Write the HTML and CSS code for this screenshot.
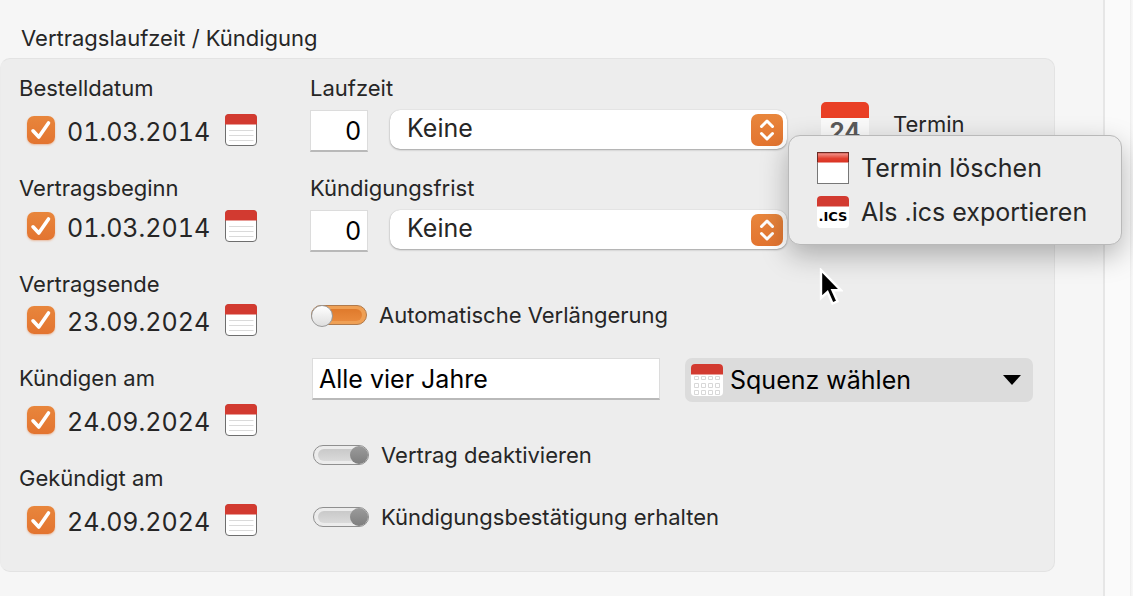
FILE: index.html
```html
<!DOCTYPE html>
<html lang="de">
<head>
<meta charset="utf-8">
<meta name="viewport" content="width=device-width, initial-scale=1">
<title>Vertragslaufzeit / Kündigung</title>
<link rel="stylesheet" href="styles.css">
</head>
<body>
<svg class="defs" aria-hidden="true">
  <symbol id="check" viewBox="0 0 28 28"><path d="M6 14.8 L11.8 21 L21.5 7" fill="none" stroke="#fff" stroke-width="3.6" stroke-linecap="round" stroke-linejoin="round"/></symbol>
  <symbol id="calendar" viewBox="0 0 32 32">
    <rect x=".5" y=".5" width="31" height="31" rx="3.5" fill="#fff" stroke="#6e6e6e"/>
    <path d="M0 10.5V4a4 4 0 0 1 4-4h24a4 4 0 0 1 4 4v6.500z" fill="#d23a30"/>
    <path d="M4 16.500h24.500M4 21.500h24.500M4 26.500h24.500" stroke="#dadada"/>
  </symbol>
  <symbol id="updown" viewBox="0 0 32 32"><path d="M10.500 12.500 L16 7 L21.500 12.500 M10.500 19.500 L16 25 L21.500 19.500" fill="none" stroke="#fff" stroke-width="3" stroke-linecap="round" stroke-linejoin="round"/></symbol>
</svg>
<main class="page">
  <h1 class="title">Vertragslaufzeit / Kündigung</h1>
  <form class="panel">
    <div class="dates">
      <div class="date-group">
        <label class="label" for="d1">Bestelldatum</label>
        <div class="date-row">
          <span class="check"><input type="checkbox" checked aria-label="Bestelldatum aktiv"><svg><use href="#check"/></svg></span>
          <input class="date" id="d1" type="text" value="01.03.2014">
          <button class="icon-button" type="button" aria-label="Bestelldatum wählen"><svg><use href="#calendar"/></svg></button>
        </div>
      </div>
      <div class="date-group compact">
        <label class="label" for="d2">Vertragsbeginn</label>
        <div class="date-row">
          <span class="check"><input type="checkbox" checked aria-label="Vertragsbeginn aktiv"><svg><use href="#check"/></svg></span>
          <input class="date" id="d2" type="text" value="01.03.2014">
          <button class="icon-button" type="button" aria-label="Vertragsbeginn wählen"><svg><use href="#calendar"/></svg></button>
        </div>
      </div>
      <div class="date-group tight">
        <label class="label" for="d3">Vertragsende</label>
        <div class="date-row">
          <span class="check"><input type="checkbox" checked aria-label="Vertragsende aktiv"><svg><use href="#check"/></svg></span>
          <input class="date" id="d3" type="text" value="23.09.2024">
          <button class="icon-button" type="button" aria-label="Vertragsende wählen"><svg><use href="#calendar"/></svg></button>
        </div>
      </div>
      <div class="date-group">
        <label class="label" for="d4">Kündigen am</label>
        <div class="date-row">
          <span class="check"><input type="checkbox" checked aria-label="Kündigen am aktiv"><svg><use href="#check"/></svg></span>
          <input class="date" id="d4" type="text" value="24.09.2024">
          <button class="icon-button" type="button" aria-label="Kündigen am wählen"><svg><use href="#calendar"/></svg></button>
        </div>
      </div>
      <div class="date-group">
        <label class="label" for="d5">Gekündigt am</label>
        <div class="date-row">
          <span class="check"><input type="checkbox" checked aria-label="Gekündigt am aktiv"><svg><use href="#check"/></svg></span>
          <input class="date" id="d5" type="text" value="24.09.2024">
          <button class="icon-button" type="button" aria-label="Gekündigt am wählen"><svg><use href="#calendar"/></svg></button>
        </div>
      </div>
    </div>

    <div class="terms">
      <div class="terms-top">
        <div class="periods">
          <div class="period">
            <label class="label" for="p1">Laufzeit</label>
            <div class="period-row">
              <input class="field number" id="p1" type="text" value="0">
              <span class="popup"><select aria-label="Einheit der Laufzeit"><option>Keine</option></select><svg><use href="#updown"/></svg></span>
            </div>
          </div>
          <div class="period">
            <label class="label" for="p2">Kündigungsfrist</label>
            <div class="period-row">
              <input class="field number" id="p2" type="text" value="0">
              <span class="popup"><select aria-label="Einheit der Kündigungsfrist"><option>Keine</option></select><svg><use href="#updown"/></svg></span>
            </div>
          </div>
        </div>
        <div class="event">
          <button class="event-button" type="button" aria-haspopup="menu" aria-expanded="true">
            <span class="day"><span class="day-number">24</span></span>
            <span class="event-label">Termin</span>
          </button>
          <div class="menu" role="menu">
            <button class="menu-item" type="button" role="menuitem">
              <svg viewBox="0 0 32 32">
                <defs><linearGradient id="gloss" x2="0" y2="1"><stop stop-color="#b8443a"/><stop offset=".15" stop-color="#f08a80"/><stop offset=".6" stop-color="#e2402f"/><stop offset="1" stop-color="#d93222"/></linearGradient></defs>
                <rect x=".5" y=".5" width="31" height="31" fill="#fff" stroke="#777"/>
                <rect x=".5" y=".5" width="31" height="10" fill="url(#gloss)"/>
                <path d="M0 .5h32M.5 0v10M31.500 0v10" stroke="#6b2a24"/>
              </svg>
              Termin löschen
            </button>
            <button class="menu-item" type="button" role="menuitem">
              <svg viewBox="0 0 32 32">
                <rect width="32" height="32" rx="4" fill="#fff"/>
                <path d="M0 10.500V4a4 4 0 0 1 4-4h24a4 4 0 0 1 4 4v6.500z" fill="#d23a30"/>
                <text class="ics" x="16" y="25" text-anchor="middle">.ICS</text>
              </svg>
              Als .ics exportieren
            </button>
          </div>
          <svg class="pointer" viewBox="0 0 24 38" aria-hidden="true"><path d="M2 2v28l6.500-6 5 11.500 5-2.200-5-11H22z" fill="#000" stroke="#fff" stroke-width="2.400"/></svg>
        </div>
      </div>

      <label class="switch"><input class="accent" type="checkbox" role="switch" checked><span>Automatische Verlängerung</span></label>
      <div class="sequence">
        <input class="field" type="text" value="Alle vier Jahre" aria-label="Sequenz">
        <button class="choose" type="button" aria-haspopup="listbox">
          <svg class="choose-icon" viewBox="0 0 32 32">
            <rect width="32" height="32" rx="4" fill="#fff"/>
            <path d="M0 10.500V4a4 4 0 0 1 4-4h24a4 4 0 0 1 4 4v6.500z" fill="#d23a30"/>
            <path d="M3.500 12.500h4v3h-4zM10.500 12.500h4v3h-4zM17.500 12.500h4v3h-4zM24.500 12.500h4v3h-4zM3.500 19.500h4v4h-4zM10.500 19.500h4v4h-4zM17.500 19.500h4v4h-4zM24.500 19.500h4v4h-4zM3.500 26.500h4v4h-4zM10.500 26.500h4v4h-4zM17.500 26.500h4v4h-4zM24.500 26.500h4v4h-4z" fill="none" stroke="#d8d8d8"/>
          </svg>
          <span>Squenz wählen</span>
          <svg class="caret" viewBox="0 0 18 10"><path d="M0 0h18L9 10z"/></svg>
        </button>
      </div>
      <label class="switch"><input type="checkbox" role="switch" checked><span>Vertrag deaktivieren</span></label>
      <label class="switch"><input type="checkbox" role="switch" checked><span>Kündigungsbestätigung erhalten</span></label>
    </div>
  </form>
</main>
</body>
</html>
```
FILE: styles.css
```css
* { box-sizing: border-box; }

body {
  margin: 0;
  min-height: 100vh;
  display: flex;
  background: linear-gradient(to right, #fafafa calc(100% - 3px), #ececec calc(100% - 3px), #f7f7f7 calc(100% - 1px));
  color: #262626;
  font: 22px/28px Inter, "Liberation Sans", sans-serif;
}

input, select, button {
  margin: 0;
  padding: 0;
  border: 0;
  background: none;
  color: inherit;
  font: inherit;
}

.defs { position: absolute; width: 0; height: 0; }
svg { display: block; flex: none; }

.page {
  flex: 1;
  margin-right: 28px;
  padding: 24px 48px 24px 0;
  border-right: 2px solid #e6e6e6;
  background: #f6f6f6;
}

.title { margin: 0 0 6px 21px; font: inherit; }

.panel {
  display: flex;
  padding: 15px 21px 34px 18px;
  border: 1px solid #e3e3e3;
  border-left-color: #ebebeb;
  border-radius: 10px;
  background: #ededed;
}

.label { display: block; }

.dates {
  flex: none;
  width: 291px;
  display: flex;
  flex-direction: column;
  gap: 27px;
}

.date-group { display: grid; gap: 11px; }
.date-group.compact { gap: 7px; }
.date-group.tight { gap: 5px; }
.date-row { display: flex; align-items: center; gap: 12px; height: 34px; padding-left: 8px; }

.check { display: grid; width: 28px; height: 28px; }
.check > * { grid-area: 1 / 1; width: 28px; height: 28px; }
.check svg { pointer-events: none; }
.check input {
  appearance: none;
  border-radius: 7px;
  background: linear-gradient(#e8863c, #e37430);
  box-shadow: 0 1px 2px #e3743066;
}

.date { width: 146px; height: 34px; padding-top: 4px; font-size: 25px; font-variant-numeric: tabular-nums; }
.icon-button, .icon-button svg { width: 32px; height: 32px; }

.terms { flex: 1; min-width: 0; }
.terms-top { display: flex; margin-bottom: 49px; }
.periods { flex: 1; display: grid; gap: 22px; }
.period { display: grid; gap: 8px; }
.period-row { display: flex; align-items: flex-start; gap: 22px; }

.field {
  height: 42px;
  padding: 0 6px;
  border: 1px solid #dcdcdc;
  border-bottom: 2px solid #b9b9b9;
  background: #fff;
  color: #000;
  font-size: 25px;
}
.number { width: 58px; text-align: right; }

.popup { flex: 1; display: grid; align-items: center; }
.popup > * { grid-area: 1 / 1; }
.popup select {
  appearance: none;
  width: 100%;
  height: 39px;
  padding: 0 50px 3px 17px;
  border-radius: 10px;
  background: #fff;
  box-shadow: 0 1px 2px #0000004d, 0 0 1px #00000033;
  font-size: 25px;
}
.popup svg {
  justify-self: end;
  width: 32px;
  height: 32px;
  margin-right: 4px;
  border-radius: 7px;
  background: linear-gradient(#e8863c, #e37430);
  pointer-events: none;
}

.event { position: relative; width: 246px; padding: 28px 0 0 34px; }
.event-button { display: flex; gap: 24px; text-align: left; }
.day {
  width: 48px;
  height: 48px;
  overflow: hidden;
  border-top: 16px solid #e93f25;
  border-radius: 5px;
  background: #fafafa;
  text-align: center;
}
.day-number { color: #5a5a5a; font-size: 24px; font-weight: 700; line-height: 28px; }
.event-label { padding-top: 8px; }

.menu {
  position: absolute;
  top: 61px;
  left: 1px;
  width: 334px;
  padding: 12px 28px 8px;
  display: grid;
  border: 1px solid #b9b9b9;
  border-radius: 12px;
  background: #ececec;
  box-shadow: 0 10px 28px #00000047;
}
.menu-item { display: flex; align-items: center; gap: 12px; height: 44px; padding-bottom: 4px; font-size: 25px; white-space: nowrap; }
.menu-item svg { width: 32px; height: 32px; }
.ics { font: 700 13px "DejaVu Sans", sans-serif; }

.pointer { position: absolute; top: 194px; left: 32px; width: 24px; height: 38px; }

.switch { display: flex; align-items: center; gap: 12px; width: max-content; }
.switch + .switch { margin-top: 34px; }
.switch input {
  appearance: none;
  position: relative;
  width: 56px;
  height: 20px;
  margin-left: 3px;
  border: 1px solid #8f8f8f;
  border-radius: 10px;
  background: #ececec;
}
.switch input::before {
  content: "";
  position: absolute;
  inset: 3px 4px;
  border-radius: 6px;
  background: linear-gradient(#c9c9c9, #dadada);
}
.switch input::after {
  content: "";
  position: absolute;
  top: 0;
  right: 0;
  width: 18px;
  height: 18px;
  border-radius: 50%;
  background: linear-gradient(#9b9b9b, #7e7e7e);
}
.switch .accent { margin-left: 1px; border-color: #b07a4c; background: #efa055; }
.switch .accent::before { background: linear-gradient(#df7a2c, #e98a3c); }
.switch .accent::after {
  top: -1px;
  right: auto;
  left: -1px;
  width: 20px;
  height: 20px;
  border: 1px solid #9a9a9a;
  background: linear-gradient(#fff, #dedede);
}

.sequence { display: grid; grid-template-columns: 1fr 1fr; gap: 25px; margin: 29px 0 39px 2px; }
.sequence .field { min-width: 0; }
.choose {
  min-width: 0;
  display: flex;
  align-items: center;
  gap: 7px;
  height: 44px;
  padding: 0 12px 0 6px;
  border-radius: 7px;
  background: #dcdcdc;
  color: #000;
  font-size: 25px;
  white-space: nowrap;
}
.choose-icon { width: 32px; height: 32px; }
.caret { width: 18px; height: 10px; margin-left: auto; }
```
